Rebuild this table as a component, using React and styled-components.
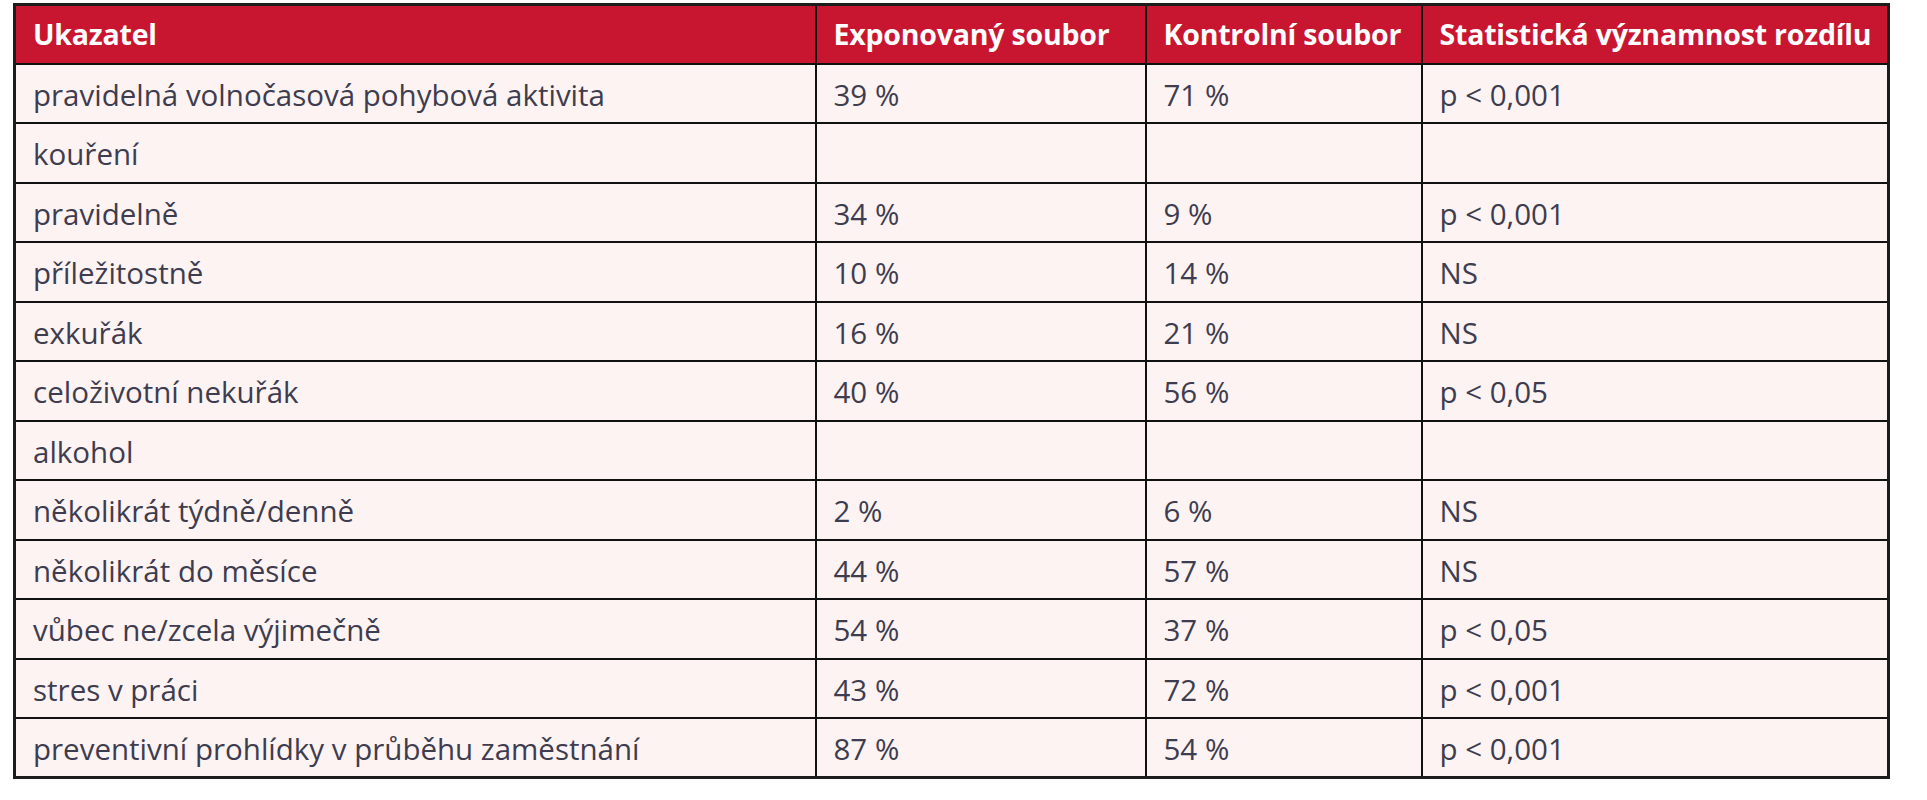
import styled, { createGlobalStyle } from 'styled-components';

const GlobalStyle = createGlobalStyle`
  html, body {
    margin: 0;
    padding: 0;
    background: #ffffff;
  }
`;

const Page = styled.div`
  padding: 3px 0 0 13px;
  font-family: "Open Sans", "Liberation Sans", sans-serif;
`;

const Table = styled.table`
  width: 1874px;
  border-collapse: collapse;
  table-layout: fixed;
  border: 3px solid #1c1c1c;
`;

const HeadCell = styled.th`
  background: #c91630;
  color: #ffffff;
  font-weight: 700;
  font-size: 28.5px;
  letter-spacing: -0.2px;
  text-align: left;
  padding: 0 0 0 17px;
  height: 59px;
  border: 2px solid #111111;
  box-sizing: border-box;
  white-space: nowrap;
`;

const Cell = styled.td`
  background: #fdf3f2;
  color: #3d3d4f;
  font-size: 29.5px;
  padding: 2px 0 0 17px;
  height: 59.5px;
  border: 2px solid #111111;
  box-sizing: border-box;
  white-space: nowrap;
`;

// šířky sloupců podle předlohy
const columns = [
  { title: 'Ukazatel', width: 801 },
  { title: 'Exponovaný soubor', width: 330 },
  { title: 'Kontrolní soubor', width: 276 },
  { title: 'Statistická významnost rozdílu', width: 467 },
];

const rows = [
  ['pravidelná volnočasová pohybová aktivita', '39 %', '71 %', 'p < 0,001'],
  ['kouření', '', '', ''],
  ['pravidelně', '34 %', '9 %', 'p < 0,001'],
  ['příležitostně', '10 %', '14 %', 'NS'],
  ['exkuřák', '16 %', '21 %', 'NS'],
  ['celoživotní nekuřák', '40 %', '56 %', 'p < 0,05'],
  ['alkohol', '', '', ''],
  ['několikrát týdně/denně', '2 %', '6 %', 'NS'],
  ['několikrát do měsíce', '44 %', '57 %', 'NS'],
  ['vůbec ne/zcela výjimečně', '54 %', '37 %', 'p < 0,05'],
  ['stres v práci', '43 %', '72 %', 'p < 0,001'],
  ['preventivní prohlídky v průběhu zaměstnání', '87 %', '54 %', 'p < 0,001'],
];

const App = () => {
  return (
    <Page>
      <GlobalStyle />
      <Table>
        <colgroup>
          {columns.map((c) => (
            <col key={c.title} style={{ width: c.width }} />
          ))}
        </colgroup>
        <thead>
          <tr>
            {columns.map((c) => (
              <HeadCell key={c.title}>{c.title}</HeadCell>
            ))}
          </tr>
        </thead>
        <tbody>
          {rows.map((r, i) => (
            <tr key={i}>
              {r.map((v, j) => (
                <Cell key={j}>{v}</Cell>
              ))}
            </tr>
          ))}
        </tbody>
      </Table>
    </Page>
  );
};

export default App;
